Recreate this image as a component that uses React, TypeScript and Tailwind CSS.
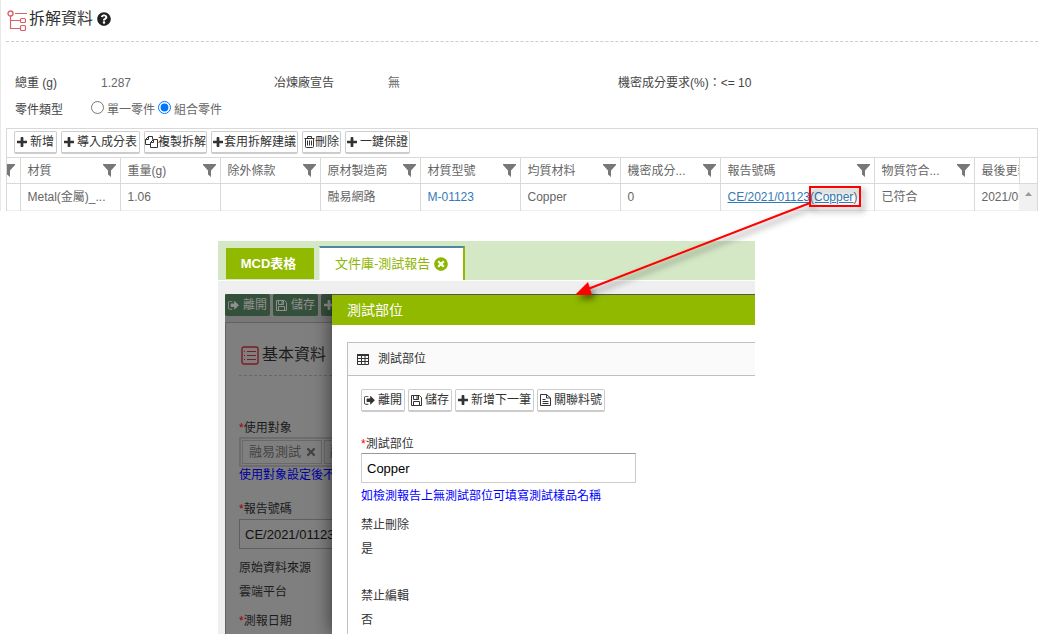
import { ReactNode, useState } from "react";
import { FaQuestionCircle, FaTimes, FaTimesCircle } from "react-icons/fa";

const PlusIcon = () => (
  <svg viewBox="192 128 1408 1408" className="size-[10px]" fill="currentColor">
    <path d="M1600 736v192q0 40-28 68t-68 28h-416v416q0 40-28 68t-68 28h-192q-40 0-68-28t-28-68v-416h-416q-40 0-68-28t-28-68v-192q0-40 28-68t68-28h416v-416q0-40 28-68t68-28h192q40 0 68 28t28 68v416h416q40 0 68 28t28 68z" />
  </svg>
);

const SignOutIcon = () => (
  <svg viewBox="64 128 1600 1600" className="size-[11px]" fill="currentColor">
    <path d="M704 1440q0 4 1 20t.5 26.5-3 23.5-10 19.5-20.5 6.5h-320q-119 0-203.5-84.5t-84.5-203.5v-704q0-119 84.5-203.5t203.5-84.5h320q13 0 22.5 9.5t9.5 22.5q0 4 1 20t.5 26.5-3 23.5-10 19.5-20.5 6.5h-320q-66 0-113 47t-47 113v704q0 66 47 113t113 47h312l11.5 1 11.5 3 8 5.5 7 9 2 13.5zm928-544q0 26-19 45l-544 544q-19 19-45 19t-45-19-19-45v-288h-448q-26 0-45-19t-19-45v-384q0-26 19-45t45-19h448v-288q0-26 19-45t45-19 45 19l544 544q19 19 19 45z" />
  </svg>
);

const SaveIcon = () => (
  <svg viewBox="0 0 11 11" className="size-[11px]" fill="none" stroke="currentColor">
    <path d="M.5 .5h8l2 2v8H.5z" />
    <path d="M2.500 .5v4h5v-4M2.500 10.500v-4h6v4" />
    <path d="M6 1v3" />
  </svg>
);

const FileIcon = () => (
  <svg viewBox="0 0 11 12" className="h-3 w-[11px]" fill="none" stroke="currentColor">
    <path d="M.5 .5h6l4 3.500v7.500H.5z" />
    <path d="M6.500 .5v3.500h4" />
    <path d="M2.500 5.500h3M2.500 7.500h6M2.500 9.500h6" />
  </svg>
);

const TrashIcon = () => (
  <svg viewBox="0 0 11 12" className="h-3 w-[11px]" fill="none" stroke="currentColor">
    <path d="M.5 2.500h10M3.500 2.500v-2h4v2M1.500 2.500v8q0 1 1 1h6q1 0 1-1v-8M3.500 4.500v5M5.500 4.500v5M7.500 4.500v5" />
  </svg>
);

const CopyIcon = () => (
  <svg viewBox="0 0 13 12" className="h-3 w-[13px]" fill="none" stroke="currentColor">
    <path d="M5 8.500H.5v-5l3-3h4v3M3.500 .5v3h-3" />
    <path d="M5.500 11.500v-5l3-3h4v8zM8.500 3.500v3h-3" />
  </svg>
);

const TableIcon = () => (
  <svg viewBox="0 0 12 11" className="h-[11px] w-3" fill="none" stroke="currentColor">
    <path d="M0 1h12" strokeWidth="2" />
    <path d="M.5 1v9.500h11V1M.5 4.500h11M.5 7.500h11M4.500 1v9M8 1v9" />
  </svg>
);

const TreeIcon = () => (
  <svg viewBox="0 0 20 21" className="h-[21px] w-5" fill="none" stroke="#d9626b">
    <circle cx="3.500" cy="3.500" r="2.500" strokeWidth="1.400" />
    <path d="M8 3.500h12M3.500 6v12.500h10M3.500 10.500h10" strokeWidth="1.200" />
    <rect x="13.500" y="8.500" width="5" height="4" rx="1" strokeWidth="1.200" />
    <rect x="13.500" y="15.500" width="5" height="5" rx="1" strokeWidth="1.200" />
  </svg>
);

const ListIcon = () => (
  <svg viewBox="0 0 18 19" className="h-[19px] w-[18px]" fill="none" stroke="#7b1d24">
    <rect x="1" y="1" width="16" height="17" rx="2" strokeWidth="1.400" />
    <path d="M3 5.500h1M3 9.500h1M3 13.500h1M6 5.500h9M6 9.500h9M6 13.500h9" />
  </svg>
);

const FilterIcon = () => (
  <svg viewBox="0 0 13 13" className="size-[13px] shrink-0" fill="#777">
    <path d="M0 0h13v1L8 6.500V13L5 10.500v-4L0 1z" />
  </svg>
);

interface IToolButton {
  icon: ReactNode;
  label: string;
  className?: string;
}

const ToolButton = ({ icon, label, className = "gap-[3px] px-0.5" }: IToolButton) => (
  <button
    className={`flex h-[23px] shrink-0 items-center rounded-xs border border-b-2 border-[#ccc] bg-white text-[#333] whitespace-nowrap ${className}`}
  >
    {icon}
    {label}
  </button>
);

const columns = [
  { title: "材質", width: "w-[100px]" },
  { title: "重量(g)", width: "w-[100px]" },
  { title: "除外條款", width: "w-[100px]" },
  { title: "原材製造商", width: "w-[100px]" },
  { title: "材質型號", width: "w-[100px]" },
  { title: "均質材料", width: "w-[100px]" },
  { title: "機密成分...", width: "w-[100px]" },
  { title: "報告號碼", width: "w-[154px]" },
  { title: "物質符合...", width: "w-[100px]" },
];

const cell = "border-r border-[#d9d9d9] px-[7px] whitespace-nowrap overflow-hidden";

const PartsTable = () => (
  <table className="w-full table-fixed border-collapse text-left text-[#666]">
    <thead>
      <tr className="h-[26px] border-y border-[#d9d9d9]">
        <th className="w-[13px] border-r border-[#d9d9d9]">
          <div className="flex justify-end overflow-hidden pr-[5px]">
            <FilterIcon />
          </div>
        </th>
        {columns.map((c) => (
          <th key={c.title} className={`${c.width} ${cell} pr-1 font-normal`}>
            <div className="flex items-center justify-between">
              {c.title}
              <FilterIcon />
            </div>
          </th>
        ))}
        <th className={`${cell} pr-0 font-normal`}>最後更新</th>
        <th className="w-[18px]" />
      </tr>
    </thead>
    <tbody>
      <tr className="h-[27px] border-b border-[#eee]">
        <td className={cell} />
        <td className={cell}>Metal(金屬)_...</td>
        <td className={cell}>1.06</td>
        <td className={cell} />
        <td className={cell}>融易網路</td>
        <td className={cell}>
          <a href="#" className="text-[#337ab7]">
            M-01123
          </a>
        </td>
        <td className={cell}>Copper</td>
        <td className={cell}>0</td>
        <td className={cell}>
          <a href="#" className="text-[#337ab7] underline">
            CE/2021/01123(Copper
          </a>
          )
        </td>
        <td className={cell}>已符合</td>
        <td className={`${cell} border-r-0 pr-0`}>2021/05/10</td>
        <td className="bg-[#f1f1f1] align-top">
          <button aria-label="向上捲動" className="flex h-5 w-full items-center justify-center">
            <svg viewBox="0 0 7 4" className="h-1 w-[7px]" fill="#999">
              <path d="M0 4L3.500 0 7 4z" />
            </svg>
          </button>
        </td>
      </tr>
    </tbody>
  </table>
);

const Breakdown = () => {
  const [partType, setPartType] = useState<string>("group");
  return (
    <section className="border-l border-[#e8e8e8] pr-[5px] pl-[5px]">
      <h1 className="flex h-[42px] items-center border-b border-dashed border-[#ccc] pb-1 text-[16px] text-[#333]">
        <span className="mt-1 mr-0.5 pl-px">
          <TreeIcon />
        </span>
        拆解資料
        <FaQuestionCircle className="ml-1 size-[14px] text-[#222]" />
      </h1>
      <div className="grid grid-cols-[86px_173px_114px_230px_1fr] pt-[29px] pl-[9px] leading-6 text-[#666]">
        <span className="text-[#444]">總重 (g)</span>
        <span>1.287</span>
        <span className="text-[#444]">冶煉廠宣告</span>
        <span>無</span>
        <span className="text-[#444]">機密成分要求(%)：&lt;= 10</span>
      </div>
      <div className="grid grid-cols-[76px_1fr] pb-[5px] pl-[9px] leading-7 text-[#666]">
        <span className="pt-px text-[#444]">零件類型</span>
        <div className="flex items-center gap-[3px]">
          <label className="flex items-center gap-[3px]">
            <input
              type="radio"
              name="partType"
              className="mb-1 size-[13px]"
              checked={partType === "single"}
              onChange={() => setPartType("single")}
            />
            單一零件
          </label>
          <label className="flex items-center gap-[3px]">
            <input
              type="radio"
              name="partType"
              className="mb-1 size-[13px]"
              checked={partType === "group"}
              onChange={() => setPartType("group")}
            />
            組合零件
          </label>
        </div>
      </div>
      <div className="-mt-px border border-b-0 border-[#d9d9d9]">
        <div className="flex gap-1 px-[7px] pt-0.5 pb-[3px]">
          <ToolButton icon={<PlusIcon />} label="新增" />
          <ToolButton icon={<PlusIcon />} label="導入成分表" />
          <ToolButton icon={<CopyIcon />} label="複製拆解" className="px-0" />
          <ToolButton icon={<PlusIcon />} label="套用拆解建議" className="gap-px px-px" />
          <ToolButton icon={<TrashIcon />} label="刪除" className="px-px" />
          <ToolButton icon={<PlusIcon />} label="一鍵保證" className="gap-[3px] px-px" />
        </div>
        <PartsTable />
      </div>
    </section>
  );
};

const dimButton =
  "flex h-[22px] shrink-0 items-center gap-1 rounded-xs bg-[#35503a] px-[3px] text-[#8f8f8f] whitespace-nowrap";

// Page behind the dialog, already darkened by the modal mask
const DimmedPage = () => (
  <div className="w-[107px] shrink-0 overflow-hidden bg-[#787878] text-[#1c1c1c]">
    <div className="flex gap-[3px]">
      <button className={dimButton}>
        <SignOutIcon />
        離開
      </button>
      <button className={dimButton}>
        <SaveIcon />
        儲存
      </button>
      <button aria-label="新增" className={`${dimButton} w-20`}>
        <PlusIcon />
      </button>
    </div>
    <div className="mt-1.5 h-full border-t border-l border-[#606060] bg-[#7f7f7f] pl-[13px] whitespace-nowrap">
      <h2 className="mt-5 flex h-[33px] items-start gap-[3px] border-b border-dashed border-[#666] pl-0.5 text-[16px] leading-6">
        <span className="pt-[3px]">
          <ListIcon />
        </span>
        基本資料
      </h2>
      <p className="mt-10 leading-6">
        <span className="text-[#a00000]">*</span>使用對象
      </p>
      <div className="-mt-[3px] flex w-40 gap-0.5 border-2 border-[#6d6d6d] p-px text-[13px] text-[#444]">
        <span className="flex h-6 items-center gap-1 border border-[#696969] pr-1 pl-1.5">
          融易測試
          <button aria-label="移除">
            <FaTimes className="size-3" />
          </button>
        </span>
        <span className="flex h-6 items-center border border-[#696969] px-[5px]">融</span>
      </div>
      <p className="text-[#0000a0] leading-4">使用對象設定後不可變更</p>
      <label htmlFor="reportNo" className="mt-[14px] block leading-6">
        <span className="text-[#a00000]">*</span>報告號碼
      </label>
      <input
        id="reportNo"
        className="-mt-0.5 block h-[30px] w-40 border border-[#606060] bg-[#808080] px-[5px] text-[13px] text-[#111]"
        defaultValue="CE/2021/01123"
      />
      <p className="mt-[7px] leading-6">原始資料來源</p>
      <p className="leading-6">雲端平台</p>
      <p className="mt-[5px] leading-6">
        <span className="text-[#a00000]">*</span>測報日期
      </p>
    </div>
  </div>
);

const TestPartDialog = () => (
  <div className="relative flex min-w-0 grow flex-col border-t border-[#555] bg-white text-[#333] shadow-[0_0_18px_rgba(0,0,0,0.6)]">
    <h2 className="bg-[#91b900] pl-[15px] text-[14px] leading-[30px] text-white">測試部位</h2>
    <div className="mt-[17px] ml-[15px] grow border-t border-l border-[#bfbfbf]">
      <h3 className="flex h-[33px] items-center gap-[9px] border-b border-[#bfbfbf] bg-[#fafafa] pl-[9px]">
        <TableIcon />
        測試部位
      </h3>
      <div className="px-[13px]">
        <div className="flex gap-[3px] pt-[13px]">
          <ToolButton icon={<SignOutIcon />} label="離開" />
          <ToolButton icon={<SaveIcon />} label="儲存" />
          <ToolButton icon={<PlusIcon />} label="新增下一筆" />
          <ToolButton icon={<FileIcon />} label="關聯料號" />
        </div>
        <label htmlFor="testPart" className="mt-5 block leading-6">
          <span className="text-[#f00]">*</span>測試部位
        </label>
        <input
          id="testPart"
          className="-mt-[3px] block h-[30px] w-[275px] max-w-full border border-[#ccc] border-t-[#999] px-[5px] text-[13px] text-black"
          defaultValue="Copper"
        />
        <p className="mt-px text-[#0000ff] leading-6">如檢測報告上無測試部位可填寫測試樣品名稱</p>
        <p className="mt-[5px] leading-6">禁止刪除</p>
        <p className="leading-6">是</p>
        <p className="mt-[23px] leading-6">禁止編輯</p>
        <p className="leading-6">否</p>
      </div>
    </div>
  </div>
);

const ReportWindow = () => (
  <section className="mt-[30px] mr-[288px] ml-[218px] bg-[#efefef]">
    <nav className="flex h-10 items-end border-b border-white bg-[#d5e8c6] pl-2 text-[13px]">
      <button className="mb-px h-[31px] w-[88px] bg-[#91b900] pr-[3px] font-bold text-white">MCD表格</button>
      <div className="ml-[5px] flex h-[34px] items-center gap-1 border-t-2 border-r-2 border-l border-t-[#4f86a0] border-r-[#91b900] border-l-[#eee] bg-white px-[15px] text-[#8db600]">
        <button>文件庫-測試報告</button>
        <button aria-label="關閉">
          <FaTimesCircle className="size-[14px]" />
        </button>
      </div>
    </nav>
    <div className="mt-[13px] ml-[7px] flex h-[340px] overflow-hidden">
      <DimmedPage />
      <TestPartDialog />
    </div>
  </section>
);

// Red frame on the link and the arrow down to the dialog
const Callout = () => (
  <svg
    viewBox="0 0 300 130"
    className="pointer-events-none absolute top-[180px] left-[570px] h-[130px] w-[300px] drop-shadow-[3px_4px_3px_rgba(0,0,0,0.5)]"
    fill="none"
    stroke="#f00"
    strokeWidth="2"
  >
    <rect x="240" y="7" width="50" height="19" />
    <path d="M240 23L18 109" />
    <path d="M5 115L18 102L22 115z" fill="#f00" stroke="none" />
  </svg>
);

const App = () => {
  return (
    <div className="relative overflow-hidden bg-white font-['Liberation_Sans','Noto_Sans_CJK_TC',sans-serif] text-[12px] leading-4">
      <Breakdown />
      <ReportWindow />
      <Callout />
    </div>
  );
};

export default App;
